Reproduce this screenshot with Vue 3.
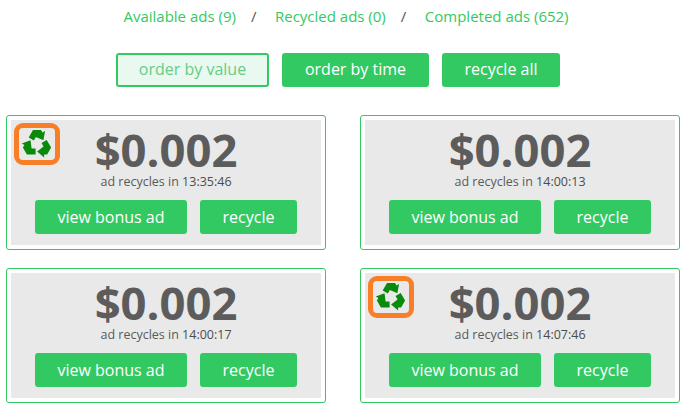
<template>
  <div class="page">
    <!-- top links -->
    <nav class="tabs">
      <template v-for="(tab, i) in tabs" :key="tab">
        <span v-if="i" class="sep">/</span>
        <a class="tab">{{ tab }}</a>
      </template>
    </nav>

    <div class="actions">
      <button class="btn top-btn btn-active">order by value</button>
      <button class="btn top-btn order-time">order by time</button>
      <button class="btn top-btn recycle-all">recycle all</button>
    </div>

    <div class="grid">
      <div v-for="ad in ads" :key="ad.time" class="card">
        <div class="card-inner">
          <div v-if="ad.flag" class="flag">
            <svg width="32" height="32" viewBox="-16 -16 32 32">
              <path
                v-for="deg in [0, 120, 240]"
                :key="deg"
                :transform="`rotate(${deg})`"
                fill="#0a8a0a"
                d="M-8.3 -6.4 L-4 -14 L4 -14 L5.5 -11.4 L8.1 -12.9 L6.4 -3.8 L-1.15 -6.9 L-3.14 -3.44 Z"
              />
            </svg>
          </div>
          <div class="price">$0.002</div>
          <div class="note">ad recycles in <span class="time">{{ ad.time }}</span></div>
          <div class="card-btns">
            <button class="btn bonus">view bonus ad</button>
            <button class="btn recycle">recycle</button>
          </div>
        </div>
      </div>
    </div>
  </div>
</template>

<script setup>
const tabs = ['Available ads (9)', 'Recycled ads (0)', 'Completed ads (652)']

const ads = [
  { time: '13:35:46', flag: true },
  { time: '14:00:13', flag: false },
  { time: '14:00:17', flag: false },
  { time: '14:07:46', flag: true }
]
</script>

<style>
body {
  background: #fff;
}
</style>

<style scoped>
.page {
  width: 686px;
  height: 406px;
  overflow: hidden;
  box-sizing: border-box;
  padding: 6px 6px 0;
  font-family: "Open Sans", sans-serif;
  color: #5a5a5a;
}

.tabs {
  display: flex;
  justify-content: center;
  height: 20px;
  line-height: 20px;
  font-size: 15px;
  padding-left: 6px;
}
.tab {
  color: #33c962;
}
.sep {
  margin: 0 18.5px 0 15px;
  color: #555;
}

.actions {
  display: flex;
  gap: 13px;
  margin: 27px 0 28px 110px;
}

.btn {
  height: 34px;
  padding: 0;
  border: none;
  border-radius: 3px;
  background: #33c962;
  color: #fff;
  font-family: inherit;
  font-size: 16px;
}
.top-btn {
  padding-bottom: 2px;
}
.btn-active {
  width: 153px;
  background: #e9f9ef;
  border: 2px solid #33c962;
  color: #66cc88;
}
.order-time {
  width: 147px;
}
.recycle-all {
  width: 118px;
}

.grid {
  display: grid;
  grid-template-columns: 320px 320px;
  column-gap: 34px;
  row-gap: 18px;
}

.card {
  height: 135px;
  box-sizing: border-box;
  padding: 4px;
  border: 1px solid #33c962;
  border-radius: 3px;
}
.card-inner {
  position: relative;
  height: 100%;
  background: #e9e9e9;
  text-align: center;
}

.flag {
  position: absolute;
  left: 3px;
  top: 3px;
  width: 46px;
  height: 42px;
  box-sizing: border-box;
  border: 5px solid #f97e28;
  border-radius: 9px;
  display: flex;
  align-items: center;
  justify-content: center;
}

.price {
  padding-top: 6px;
  line-height: 46px;
  font-size: 45.4px;
  font-weight: 700;
  color: #5c5c5c;
}
.note {
  margin-top: 1px;
  line-height: 18px;
  font-size: 12.5px;
}
.time {
  color: #4c4c4c;
}

.card-btns {
  display: flex;
  justify-content: center;
  gap: 13px;
  margin-top: 9px;
}
.bonus {
  width: 152px;
}
.recycle {
  width: 97px;
}
</style>
